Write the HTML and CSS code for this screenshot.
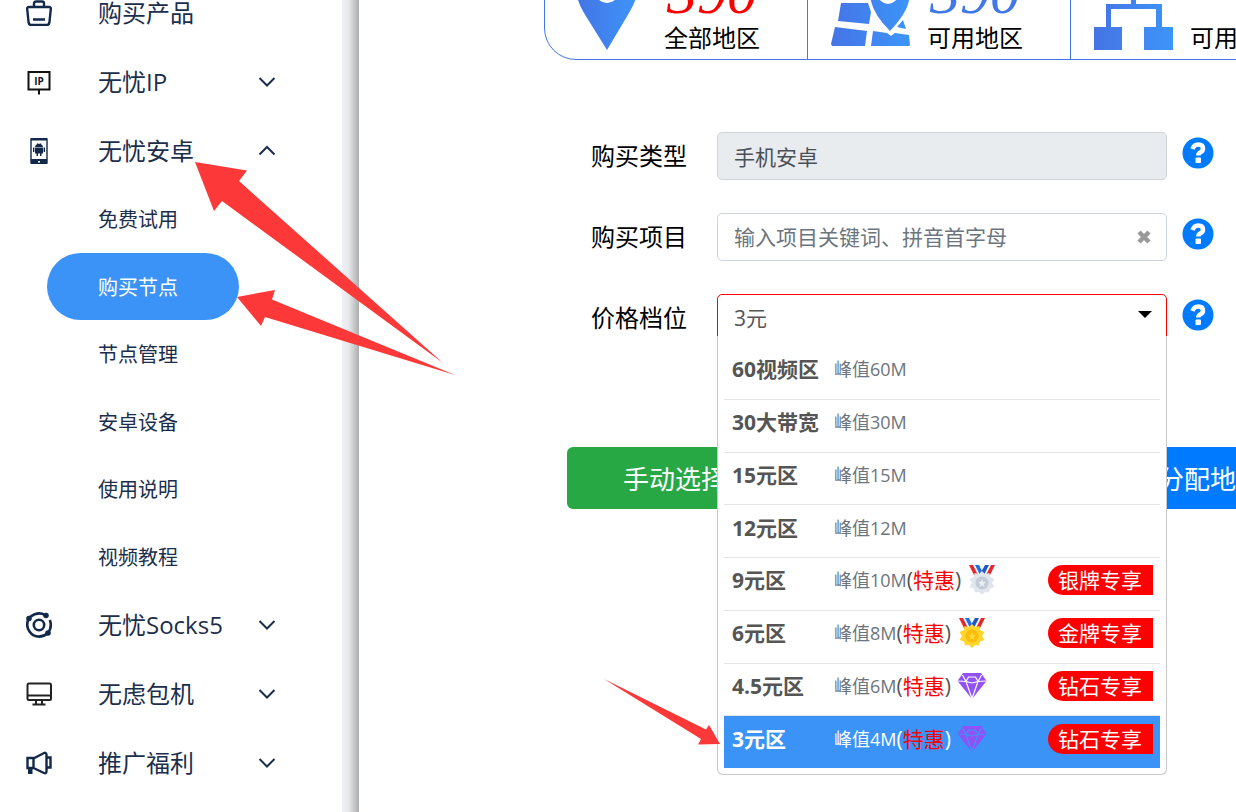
FILE: index.html
```html
<!DOCTYPE html>
<html lang="zh-CN">
<head>
    <meta charset="UTF-8">
    <meta name="viewport" content="width=device-width, initial-scale=1.0">
    <title>购买节点</title>
    <link rel="stylesheet" href="styles.css">
</head>
<body>

    <!-- Sidebar -->
    <nav class="sidebar">
        <ul class="menu">
            <li>
                <a class="menu-item" href="#">
                    <svg class="menu-icon" viewBox="0 0 26 26" fill="none" stroke="#12294a" stroke-width="2.400"><path d="M8 7V3.500Q8 1.500 10 1.500H16Q18 1.500 18 3.500V7M3 7H23Q25 7 24.800 9L23.400 22.500Q23 25 21 25H5Q3 25 2.600 22.500L1.200 9Q1 7 3 7ZM7 19.500H19"/></svg>
                    <span class="menu-text">购买产品</span>
                </a>
            </li>
            <li>
                <a class="menu-item" href="#">
                    <svg class="menu-icon" viewBox="0 0 26 26"><path d="M2.500 3H23.500V20.500H2.500ZM13 20V25.500" fill="none" stroke="#111" stroke-width="2"/><text class="ip-text" x="13" y="15.500" text-anchor="middle">IP</text></svg>
                    <span class="menu-text">无忧IP</span>
                    <svg class="chevron" viewBox="0 0 18 18"><path d="M1.500 5 9 12.500 16.500 5"/></svg>
                </a>
            </li>
            <li>
                <a class="menu-item" href="#">
                    <svg class="menu-icon" viewBox="0 0 26 26"><path d="M5 1H21V25H5Z" fill="none" stroke="#12294a" stroke-width="1.400"/><path d="M5 0H21V2.500H5ZM5 21H21V26H5Z" fill="#12294a"/><path d="M12 23h2v1.500h-2z" fill="#fff"/><path d="M9 9Q9.500 6.500 11.300 6L10.500 4.800 12 5.700H14L15.500 4.800 14.700 6Q16.500 6.500 17 9ZM9 9.500H17V15.500H15.500V18H14V15.500H12V18H10.500V15.500H9ZM7 9.500H8.400V14H7ZM17.600 9.500H19V14H17.600Z" fill="#12294a"/></svg>
                    <span class="menu-text">无忧安卓</span>
                    <svg class="chevron" viewBox="0 0 18 18"><path d="M1.500 12.500 9 5 16.500 12.500"/></svg>
                </a>
                <ul class="submenu">
                    <li><a href="#">免费试用</a></li>
                    <li><a class="active" href="#">购买节点</a></li>
                    <li><a href="#">节点管理</a></li>
                    <li><a href="#">安卓设备</a></li>
                    <li><a href="#">使用说明</a></li>
                    <li><a href="#">视频教程</a></li>
                </ul>
            </li>
            <li>
                <a class="menu-item" href="#">
                    <svg class="menu-icon" viewBox="0 0 26 26" fill="none" stroke="#12294a" stroke-width="2.600"><circle cx="13" cy="13" r="5.200"/><path d="M2.500 7Q-.500 14 3.500 19.500Q7 24.600 13 24.600Q18 24.600 22 21M22 21Q26.500 15 23.800 8M4 5Q12-1 19 3"/><circle cx="3" cy="6.500" r="1.500" fill="#12294a"/><circle cx="20" cy="3.500" r="1.500" fill="#12294a"/><circle cx="22" cy="21" r="1.500" fill="#12294a"/></svg>
                    <span class="menu-text">无忧Socks5</span>
                    <svg class="chevron" viewBox="0 0 18 18"><path d="M1.500 5 9 12.500 16.500 5"/></svg>
                </a>
            </li>
            <li>
                <a class="menu-item" href="#">
                    <svg class="menu-icon" viewBox="0 0 26 26" fill="none" stroke="#222" stroke-width="2"><rect x="1.500" y="2.500" width="23.500" height="16.500" rx="1.500"/><path d="M1.500 14.500H25M10 19V23M16 19V23M6.500 23.500H19.500"/></svg>
                    <span class="menu-text">无虑包机</span>
                    <svg class="chevron" viewBox="0 0 18 18"><path d="M1.500 5 9 12.500 16.500 5"/></svg>
                </a>
            </li>
            <li>
                <a class="menu-item" href="#">
                    <svg class="menu-icon" viewBox="0 0 26 26" fill="none" stroke="#12294a" stroke-width="2.400"><path d="M1.500 8H7.500V18H1.500ZM7.500 8.500 18 3Q20 2.200 20.500 4.500V21Q20.500 24.200 18 23L7.500 18M21 7.500H24.500V17.500H21"/><path d="M2 18H6.500V24H2Z" fill="#12294a" stroke="none"/></svg>
                    <span class="menu-text">推广福利</span>
                    <svg class="chevron" viewBox="0 0 18 18"><path d="M1.500 5 9 12.500 16.500 5"/></svg>
                </a>
            </li>
        </ul>
    </nav>

    <!-- Main Content -->
    <main class="main-content">
        <svg class="defs" aria-hidden="true">
            <defs>
                <linearGradient id="blue" x1="0" x2="1" y1="0" y2="0"><stop offset="0" stop-color="#4574e5"/><stop offset="1" stop-color="#3c95fa"/></linearGradient>
                <linearGradient id="blue-wide" gradientUnits="userSpaceOnUse" x1="0" x2="80" y1="0" y2="0"><stop offset="0" stop-color="#4574e5"/><stop offset="1" stop-color="#3c95fa"/></linearGradient>
                <symbol id="help" viewBox="0 0 32 32">
                    <circle cx="16" cy="16" r="15.500" fill="#007bff"/>
                    <path d="M10.500 12Q12 7.500 16.200 7.500Q21 7.500 21 11.700Q21 14 18.500 15.300Q16.300 16.500 16.300 18.500" fill="none" stroke="#fff" stroke-width="4.500"/>
                    <rect x="13.500" y="20.500" width="5.500" height="5.500" rx="1" fill="#fff"/>
                </symbol>
                <symbol id="medal" viewBox="0 0 26 30">
                    <path d="M0 0H4L9 10H5Z" fill="#e2272d"/><path d="M6 0H10L13 6 11 10Z" fill="#1f6fe0"/><path d="M16 0H20L15 10 12 7Z" fill="#1f58c9"/><path d="M22 0H26L21 10H17Z" fill="#e2272d"/>
                    <path d="M13 6 16 9 20.500 8 21 12 25.500 14 23 18 25.500 22 21 23.500 20 27.500 16 27 13 30 10 27 6 27.500 5 23.500 .500 22 3 18 .500 14 5 12 5.500 8 10 9Z" fill="currentColor"/>
                </symbol>
                <symbol id="gem" viewBox="0 0 30 26">
                    <path d="M6 0H24L29.500 8 15 26 .500 8Z" fill="#9151f5"/>
                    <path d="M1 8 9 8.500 15 10 21 8.500 29 8M5.500 2 9 8.500 15 25.500 21 8.500 24.500 2M9 8.500 11.500 4H18.500L21 8.500" fill="none" stroke="currentColor" stroke-width="1.200"/>
                </symbol>
            </defs>
        </svg>

        <!-- Region stats -->
        <section class="stats">
            <div class="stat">
                <svg class="stat-icon" viewBox="0 0 80 80"><path fill="url(#blue)" fill-rule="evenodd" d="M39 80 16 43Q9 31 9 24Q9 0 39 0Q69 0 69 24Q68 31 61 43ZM39 9A12 12 0 1 0 39 33A12 12 0 1 0 39 9Z"/></svg>
                <div class="stat-info"><span class="stat-number red">390</span><span>全部地区</span></div>
            </div>
            <div class="stat">
                <svg class="stat-icon" viewBox="0 0 80 80"><path fill="url(#blue-wide)" fill-rule="evenodd" d="M10 33H37L40 42 38 54 7 51ZM4 57 36 61 34 76H1L0 74ZM42 61 56 63 60 66 64 63 78 65 79 75 78 76H40ZM72 50 75 59 66 57ZM59 61Q43 45 40 31Q35 2 58 2Q81 3 78 30Q76 43 59 61ZM57 14A10 10 0 1 0 57 34A10 10 0 1 0 57 14Z"/></svg>
                <div class="stat-info"><span class="stat-number blue">390</span><span>可用地区</span></div>
            </div>
            <div class="stat">
                <svg class="stat-icon" viewBox="0 0 80 80"><path fill="url(#blue-wide)" d="M26 0H53V22H42V34H68V57H79V80H50V57H62V39H17V57H28V80H0V57H12V34H37V22H26Z"/></svg>
                <div class="stat-info"><span>可用节点</span></div>
            </div>
        </section>

        <!-- Purchase form -->
        <form class="buy-form">
            <div class="form-row">
                <label for="buy-type">购买类型</label>
                <div class="field"><input class="control" id="buy-type" type="text" value="手机安卓" disabled></div>
                <button class="help-btn" type="button" aria-label="帮助"><svg><use href="#help"/></svg></button>
            </div>
            <div class="form-row">
                <label for="buy-project">购买项目</label>
                <div class="field">
                    <input class="control" id="buy-project" type="text" placeholder="输入项目关键词、拼音首字母">
                    <button class="clear-btn" type="button" aria-label="清空"><svg viewBox="0 0 14 14"><path d="M2 2 12 12M12 2 2 12" stroke="#999" stroke-width="4.500"/></svg></button>
                </div>
                <button class="help-btn" type="button" aria-label="帮助"><svg><use href="#help"/></svg></button>
            </div>
            <div class="form-row">
                <label for="price">价格档位</label>
                <div class="field">
                    <select class="control price-select" id="price"><option>3元</option></select>
                    <svg class="caret" viewBox="0 0 14 7"><path d="M0 0H14L7 7Z"/></svg>
                    <ul class="price-list">
                        <li><button class="price-option" type="button"><b>60视频区</b><small>峰值60M</small></button></li>
                        <li><button class="price-option" type="button"><b>30大带宽</b><small>峰值30M</small></button></li>
                        <li><button class="price-option" type="button"><b>15元区</b><small>峰值15M</small></button></li>
                        <li><button class="price-option" type="button"><b>12元区</b><small>峰值12M</small></button></li>
                        <li><button class="price-option" type="button"><b>9元区</b><small>峰值10M</small><span>(<em>特惠</em>)</span><svg class="medal silver"><use href="#medal"/><circle cx="13" cy="18" r="6.500" fill="#c3cbd8"/><path d="M13 14 14.200 16.800 17 17 14.800 19 15.500 22 13 20.300 10.500 22 11.200 19 9 17 11.800 16.800Z" fill="#e9eef5"/></svg><span class="tag">银牌专享</span></button></li>
                        <li><button class="price-option" type="button"><b>6元区</b><small>峰值8M</small><span>(<em>特惠</em>)</span><svg class="medal gold"><use href="#medal"/><circle cx="13" cy="18" r="6.500" fill="#fdbb0a"/><path d="M13 14 14.200 16.800 17 17 14.800 19 15.500 22 13 20.300 10.500 22 11.200 19 9 17 11.800 16.800Z" fill="#ffd83a"/></svg><span class="tag">金牌专享</span></button></li>
                        <li><button class="price-option" type="button"><b>4.5元区</b><small>峰值6M</small><span>(<em>特惠</em>)</span><svg class="gem"><use href="#gem"/></svg><span class="tag">钻石专享</span></button></li>
                        <li><button class="price-option selected" type="button"><b>3元区</b><small>峰值4M</small><span>(<em>特惠</em>)</span><svg class="gem"><use href="#gem"/></svg><span class="tag">钻石专享</span></button></li>
                    </ul>
                </div>
                <button class="help-btn" type="button" aria-label="帮助"><svg><use href="#help"/></svg></button>
            </div>
            <div class="actions">
                <button class="btn btn-green" type="button">手动选择地区</button>
                <button class="btn btn-blue" type="button">自动分配地区</button>
            </div>
        </form>
    </main>

    <!-- Guide arrows -->
    <svg class="guide" viewBox="0 0 1236 812" aria-hidden="true">
        <path d="M195 162 247 170.500 239 181 443 363 222 201 214 211ZM237 297 275 290 272 299.500 455 375 265 317 261 326ZM604 679 706 729.500 709 725 720 744 698 744.500 701 739Z"/>
    </svg>

</body>
</html>
```
FILE: styles.css
```css
* {
    box-sizing: border-box;
}
body {
    font-family: "Open Sans", "Noto Sans CJK SC", sans-serif;
    margin: 0;
    display: flex;
    height: 100vh;
    overflow: hidden;
    background: white;
    color: black;
}
button, input, select {
    font-family: inherit;
}
ul {
    list-style: none;
    margin: 0;
    padding: 0;
}
a {
    text-decoration: none;
}

/* Sidebar */
.sidebar {
    flex: none;
    width: 359px;
    padding-right: 17px;
    background: linear-gradient(to right, #eff1f6, #e5e7ea 40%, #adadad) right / 17px 100% no-repeat;
}
.menu {
    margin-top: -22px;
}
.menu-item {
    display: flex;
    align-items: center;
    height: 69px;
    padding-left: 26px;
    color: #1b2e4b;
    font-size: 24px;
}
.menu-icon {
    width: 26px;
    height: 26px;
    margin-right: 46px;
}
.ip-text {
    font-size: 10px;
    font-weight: bold;
    fill: #111;
}
.menu-text {
    width: 160px;
    padding-bottom: 2px;
    white-space: nowrap;
}
.chevron {
    width: 18px;
    height: 18px;
    fill: none;
    stroke: #1b2e4b;
    stroke-width: 2;
}
.submenu {
    display: grid;
    grid-template-rows: repeat(6, 1fr);
    height: 405px;
    padding-left: 47px;
}
.submenu a {
    display: flex;
    align-items: center;
    width: 192px;
    height: 67px;
    padding-left: 51px;
    border-radius: 34px;
    color: #1b2e4b;
    font-size: 20px;
}
.submenu .active {
    background: #3b93f8;
    color: white;
}

/* Main Content */
.main-content {
    flex: 1;
    min-width: 0;
    overflow: hidden;
    padding-left: 185px;
}
.defs {
    position: absolute;
    width: 0;
    height: 0;
}

/* Stats */
.stats {
    display: flex;
    width: max-content;
    height: 120px;
    margin-top: -60px;
    border: 1px solid #4078e8;
    border-radius: 32px;
}
.stat {
    display: flex;
    align-items: flex-end;
    gap: 16px;
    width: 263px;
    padding: 0 0 9px 23px;
    border-right: 1px solid #4078e8;
    font-size: 24px;
}
.stat:last-child {
    border-right: none;
}
.stat-icon {
    width: 80px;
    height: 80px;
}
.stat-info {
    display: flex;
    flex-direction: column;
    align-items: center;
    width: 96px;
    line-height: 24px;
    white-space: nowrap;
}
.stat-number {
    margin-bottom: 3px;
    font-family: "Liberation Serif", serif;
    font-style: italic;
    font-size: 60px;
    line-height: 60px;
}
.red {
    color: red;
}
.blue {
    color: #4078e8;
}

/* Form */
.buy-form {
    display: flex;
    flex-direction: column;
    gap: 33px;
    margin-top: 72px;
}
.form-row {
    display: flex;
    padding-left: 47px;
}
.form-row label {
    width: 126px;
    font-size: 24px;
    line-height: 48px;
}
.field {
    position: relative;
    width: 450px;
    height: 48px;
}
.control {
    display: block;
    width: 100%;
    height: 48px;
    padding: 0 16px;
    border: 1px solid #ced4da;
    border-radius: 5px;
    background: white;
    color: #495057;
    font-size: 21px;
}
.control:disabled {
    background: #e9ecef;
}
.control::placeholder {
    color: #6c757d;
}
.price-select {
    appearance: none;
    border-color: red;
    color: #555;
}
.caret {
    position: absolute;
    top: 17px;
    right: 15px;
    width: 14px;
    height: 7px;
}
.clear-btn {
    position: absolute;
    top: 17px;
    right: 16px;
    width: 14px;
    height: 14px;
    padding: 0;
    border: none;
    background: none;
}
.clear-btn svg {
    display: block;
}
.help-btn {
    width: 32px;
    height: 32px;
    margin: 5px 0 0 15px;
    padding: 0;
    border: none;
    background: none;
    cursor: pointer;
}
.help-btn svg {
    display: block;
    width: 32px;
    height: 32px;
}

/* Price list */
.price-list {
    position: absolute;
    top: 42px;
    left: 0;
    display: grid;
    grid-template-rows: repeat(8, 1fr);
    width: 450px;
    height: 439px;
    padding: 10px 6px 6px;
    border: 1px solid #c8c8c8;
    border-top: none;
    border-radius: 0 0 6px 6px;
    background: white;
}
.price-list li + li {
    border-top: 1px solid #e5e5e5;
}
.price-option {
    display: flex;
    align-items: center;
    width: 100%;
    height: 100%;
    padding: 0 7px 7px 8px;
    border: none;
    background: none;
    color: #555;
    font-size: 21px;
    line-height: 30px;
    text-align: left;
    white-space: nowrap;
    cursor: pointer;
}
.price-option b {
    width: 102px;
}
.price-option small {
    color: #6c757d;
    font-size: 18px;
}
.price-option em {
    color: red;
    font-style: normal;
}
.price-option.selected {
    background: #3b93f8;
    color: white;
}
.selected small {
    color: white;
}
.medal {
    width: 26px;
    height: 30px;
    margin-left: 8px;
}
.silver {
    color: #dfe6ee;
}
.gold {
    color: #ffd52e;
}
.gem {
    width: 30px;
    height: 26px;
    margin-left: 6px;
    color: white;
}
.selected .gem {
    color: #3b93f8;
}
.tag {
    width: 105px;
    height: 30px;
    margin-left: auto;
    padding-left: 10px;
    border-radius: 15px 0 0 15px;
    background: red;
    color: white;
}

/* Buttons */
.actions {
    display: flex;
    gap: 215px;
    margin-top: 72px;
    padding-left: 23px;
}
.btn {
    flex: none;
    width: 268px;
    height: 62px;
    border: none;
    border-radius: 6px;
    color: white;
    font-size: 26px;
    cursor: pointer;
}
.btn-green {
    background: #28a745;
}
.btn-blue {
    background: #007bff;
}

/* Guide arrows lie over the whole page */
.guide {
    position: absolute;
    top: 0;
    left: 0;
    width: 1236px;
    height: 812px;
    fill: #fc3838;
    pointer-events: none;
}
```
